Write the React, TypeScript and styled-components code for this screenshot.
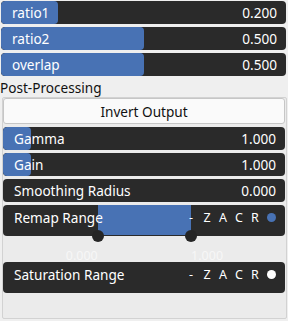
import React from 'react';
import styled, { createGlobalStyle } from 'styled-components';

const GlobalStyle = createGlobalStyle`
  body {
    margin: 0;
    background: #efefef;
    font-family: "Noto Sans", "Open Sans", sans-serif;
    font-size: 13.6px;
  }
`;

const BLUE = '#4872b4';

type Slider = { label: string; value: number; max: number };

const topSliders: Slider[] = [
  { label: 'ratio1', value: 0.2, max: 1 },
  { label: 'ratio2', value: 0.5, max: 1 },
  { label: 'overlap', value: 0.5, max: 1 },
];

const postSliders: Slider[] = [
  { label: 'Gamma', value: 1, max: 10 },
  { label: 'Gain', value: 1, max: 10 },
  { label: 'Smoothing Radius', value: 0, max: 10 },
];

const SliderRow = ({ label, value, max }: Slider) => (
  <Row>
    <Fill style={{ width: `${(value / max) * 100}%` }} />
    <Label>{label}</Label>
    <Value>{value.toFixed(3)}</Value>
  </Row>
);

const RangeWidget = ({ label, dot, range }: { label: string; dot: string; range?: [number, number] }) => (
  <RangeBlock>
    <RangeRow>
      {range && (
        <>
          <RangeFill style={{ left: `${range[0] * 100}%`, width: `${(range[1] - range[0]) * 100}%` }} />
          <Handle style={{ left: `${range[0] * 100}%` }} />
          <Handle style={{ left: `${range[1] * 100}%` }} />
        </>
      )}
      <RangeHeader>
        <Label>{label}</Label>
        <Flags>
          {['-', 'Z', 'A', 'C', 'R'].map((f) => (
            <Flag key={f}>{f}</Flag>
          ))}
          <Dot $color={dot} />
        </Flags>
      </RangeHeader>
    </RangeRow>
    <RangeLabels>
      {range && (
        <>
          <RangeValue $align="right" style={{ left: `${range[0] * 100}%` }}>0.000</RangeValue>
          <RangeValue $align="left" style={{ left: `${range[1] * 100}%` }}>1.000</RangeValue>
        </>
      )}
    </RangeLabels>
  </RangeBlock>
);

export default function App() {
  return (
    <>
      <GlobalStyle />
      <Page>
        <TopList>
          {topSliders.map((s) => (
            <SliderRow key={s.label} {...s} />
          ))}
        </TopList>
        <SectionTitle>Post-Processing</SectionTitle>
        <Panel>
          <Button>Invert Output</Button>
          {postSliders.map((s) => (
            <SliderRow key={s.label} {...s} />
          ))}
          <RangeWidget label="Remap Range" dot={BLUE} range={[0.336, 0.667]} />
          <RangeWidget label="Saturation Range" dot="#ffffff" />
        </Panel>
      </Page>
    </>
  );
}

const Page = styled.div`
  width: 288px;
  height: 321px;
  padding-top: 1px;
  box-sizing: border-box;
  overflow: hidden;
`;

const TopList = styled.div`
  display: flex;
  flex-direction: column;
  gap: 3px;
  margin: 0 2px 0 1px;
`;

const Row = styled.div`
  position: relative;
  height: 23px;
  background: #2a2a2a;
  border-radius: 4px;
  overflow: hidden;
  display: flex;
  align-items: center;
  justify-content: space-between;
  padding: 0 9px 0 11px;
  color: #ffffff;
`;

const Fill = styled.div`
  position: absolute;
  left: 0;
  top: 0;
  bottom: 0;
  background: ${BLUE};
  border-radius: 4px;
`;

const Label = styled.span`
  position: relative;
  white-space: nowrap;
`;

const Value = styled.span`
  position: relative;
`;

const SectionTitle = styled.div`
  color: #111111;
  padding-top: 2px;
  height: 19px;
  line-height: 20px;
`;

const Panel = styled.div`
  margin: 0 1px 0 2px;
  border: 1px solid #d2d2d2;
  border-radius: 2px;
  background: #ebebeb;
  padding: 0 1px 2px 0;
  display: flex;
  flex-direction: column;
  gap: 3px;
`;

const Button = styled.div`
  height: 26px;
  box-sizing: border-box;
  background: #fafafa;
  border: 1px solid #c6c6c6;
  border-radius: 3px;
  display: flex;
  align-items: center;
  justify-content: center;
  color: #111111;
`;

const RangeBlock = styled.div`
  display: flex;
  flex-direction: column;
`;

const RangeRow = styled.div`
  position: relative;
  height: 31px;
  background: #2a2a2a;
  border-radius: 4px;
  color: #ffffff;
`;

const RangeHeader = styled.div`
  position: relative;
  height: 24px;
  display: flex;
  align-items: center;
  justify-content: space-between;
  padding: 0 9px 0 11px;
`;

const Flags = styled.div`
  display: flex;
  align-items: center;
  font-size: 12.5px;
`;

const Flag = styled.span`
  width: 16px;
  text-align: center;
`;

const Dot = styled.span<{ $color: string }>`
  width: 9px;
  height: 9px;
  border-radius: 50%;
  background: ${(p) => p.$color};
  margin-left: 4px;
`;

const RangeFill = styled.div`
  position: absolute;
  top: 0;
  bottom: 1px;
  background: ${BLUE};
`;

const Handle = styled.div`
  position: absolute;
  bottom: -6px;
  width: 12px;
  height: 12px;
  margin-left: -6px;
  border-radius: 50%;
  background: #252525;
  z-index: 2;
`;

const RangeLabels = styled.div`
  position: relative;
  height: 23px;
`;

const RangeValue = styled.span<{ $align: 'left' | 'right' }>`
  position: absolute;
  top: 11px;
  font-size: 12.5px;
  color: #f7f7f7;
  transform: ${(p) => (p.$align === 'right' ? 'translateX(-100%)' : 'none')};
`;
